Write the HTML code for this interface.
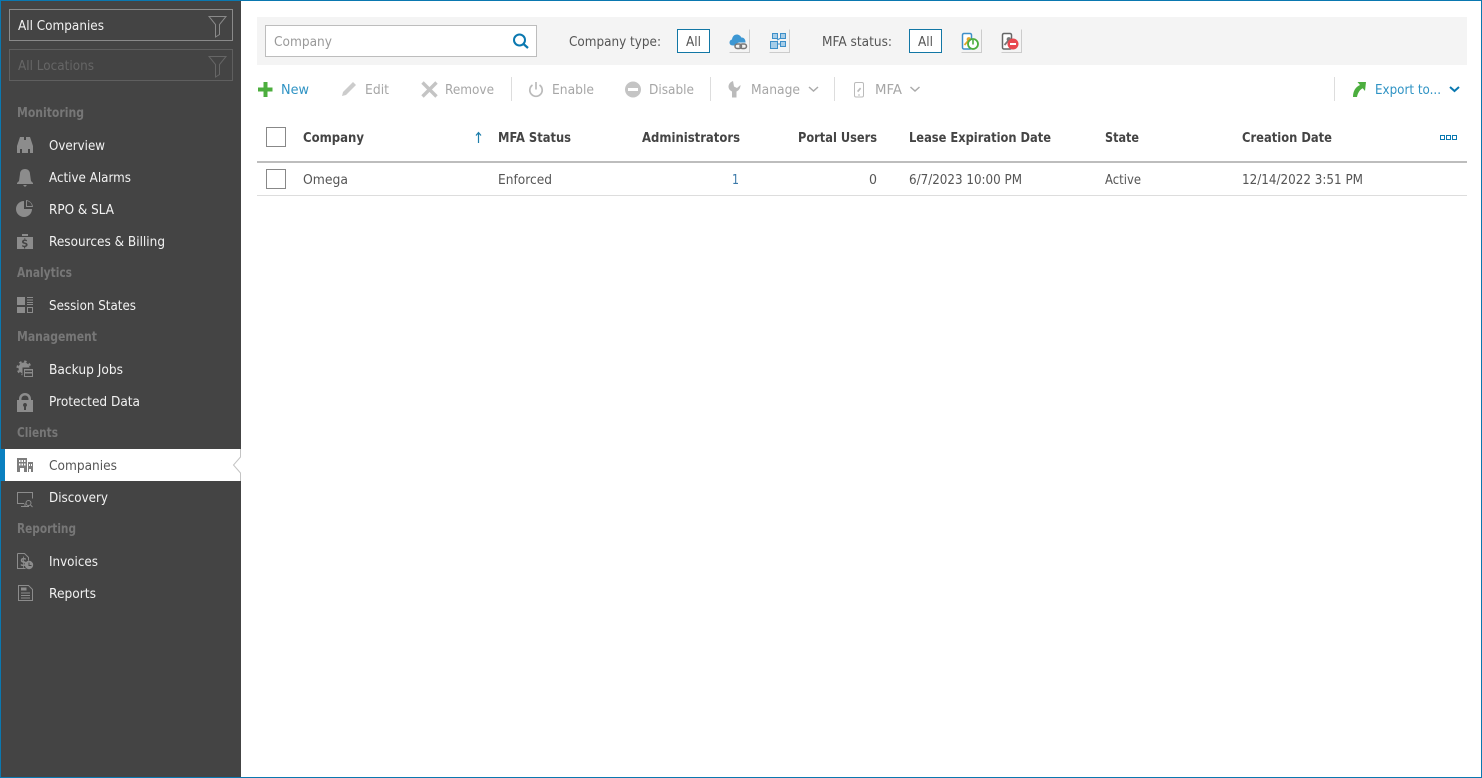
<!DOCTYPE html>
<html><head><meta charset="utf-8"><title>Companies</title>
<style>
html,body{margin:0;padding:0;background:#fff;overflow:hidden}
svg{display:block}
text{font-family:"DejaVu Sans","Liberation Sans",sans-serif;font-size:13px}
.n{fill:#f2f2f2}
.h{fill:#777;font-weight:bold}
.d{fill:#a6a6a6}
.t{fill:#555}
.b{fill:#444;font-weight:bold}
.l{fill:#2f93c4}
</style></head><body>
<svg xmlns="http://www.w3.org/2000/svg" width="1482" height="778" viewBox="0 0 1482 778">
<rect width="1482" height="778" fill="#fff"/>
<rect x="0" y="0" width="241" height="778" fill="#444"/>
<rect x="0" y="0" width="1482" height="1" fill="#0a78b0"/>
<rect x="0" y="0" width="1" height="778" fill="#0a78b0"/>
<rect x="1481" y="0" width="1" height="778" fill="#0a78b0"/>
<rect x="0" y="777" width="1482" height="1" fill="#0a78b0"/>

<!-- scopes -->
<rect x="9.500" y="9.500" width="223" height="31" fill="none" stroke="#8a8a8a"/>
<text class="n" x="18" y="30" textLength="86" lengthAdjust="spacingAndGlyphs">All Companies</text>
<path d="M209 16.500h17l-6.500 8v10l-4 2.500v-12.500z" fill="none" stroke="#8a8a8a"/>
<rect x="9.500" y="49.500" width="223" height="31" fill="none" stroke="#5f5f5f"/>
<text x="18" y="70" fill="#666" textLength="76" lengthAdjust="spacingAndGlyphs">All Locations</text>
<path d="M209 56.500h17l-6.500 8v10l-4 2.500v-12.500z" fill="none" stroke="#666"/>

<!-- nav -->
<text class="h" x="17" y="117" textLength="67" lengthAdjust="spacingAndGlyphs">Monitoring</text>
<text class="n" x="49" y="150" textLength="56" lengthAdjust="spacingAndGlyphs">Overview</text>
<text class="n" x="49" y="182" textLength="82" lengthAdjust="spacingAndGlyphs">Active Alarms</text>
<text class="n" x="49" y="214" textLength="65" lengthAdjust="spacingAndGlyphs">RPO &amp; SLA</text>
<text class="n" x="49" y="246" textLength="116" lengthAdjust="spacingAndGlyphs">Resources &amp; Billing</text>
<text class="h" x="17" y="277" textLength="55" lengthAdjust="spacingAndGlyphs">Analytics</text>
<text class="n" x="49" y="310" textLength="87" lengthAdjust="spacingAndGlyphs">Session States</text>
<text class="h" x="17" y="341" textLength="80" lengthAdjust="spacingAndGlyphs">Management</text>
<text class="n" x="49" y="374" textLength="74" lengthAdjust="spacingAndGlyphs">Backup Jobs</text>
<text class="n" x="49" y="406" textLength="91" lengthAdjust="spacingAndGlyphs">Protected Data</text>
<text class="h" x="17" y="437" textLength="41" lengthAdjust="spacingAndGlyphs">Clients</text>
<rect x="0" y="449" width="241" height="32" fill="#fff"/>
<rect x="0" y="449" width="5" height="32" fill="#0a80c0"/>
<path d="M240.500 449v8l-7 8 7 8v8" fill="none" stroke="#c4c4c4"/>
<text x="49" y="470" fill="#555" textLength="68" lengthAdjust="spacingAndGlyphs">Companies</text>
<text class="n" x="49" y="502" textLength="59" lengthAdjust="spacingAndGlyphs">Discovery</text>
<text class="h" x="17" y="533" textLength="59" lengthAdjust="spacingAndGlyphs">Reporting</text>
<text class="n" x="49" y="566" textLength="49" lengthAdjust="spacingAndGlyphs">Invoices</text>
<text class="n" x="49" y="598" textLength="47" lengthAdjust="spacingAndGlyphs">Reports</text>

<!-- nav icons -->
<g fill="#8c8c8c">
<path d="M20 137h4v3h1v13h-3v-4h-2v4h-3v-7zM26 137h4l3 9v7h-3v-4h-2v4h-3v-13h1zM25 141h1v4h-1z"/>
<path d="M25 169c3 0 5 2 5 5l1 7 2 2v1H17v-1l2-2 1-7c0-3 2-5 5-5zM23 185h4l-2 2z"/>
<path d="M24 201v8h8a8 8 0 1 1-8-8z"/><path d="M26 200a8 8 0 0 1 7 7h-7zM27 201v5h5a6 6 0 0 0-5-5z" fill-rule="evenodd"/>
<path d="M22 234h6v2h-6z"/><path fill-rule="evenodd" d="M17 237h16v12H17zM24.500 238v1.500c-1.500.2-2.500 1-2.500 2.200 0 1.300 1 1.800 2.500 2.200 1 .3 1.300.5 1.300 1 0 .5-.6.8-1.400.8s-1.600-.3-2.200-.7v1.500c.5.3 1.100.5 1.800.6v1.400h1.200v-1.400c1.500-.2 2.400-1.100 2.400-2.300 0-1.300-.9-1.900-2.400-2.300-1.100-.3-1.400-.5-1.400-.9s.5-.7 1.200-.7 1.300.2 1.900.5v-1.400c-.5-.2-1-.4-1.700-.5V238z"/>
<path d="M17 297h8v8h-8zM17 307h8v6h-8z"/>
<path d="M27 297h6v1h-6zM27 299.500h6v1h-6zM27 302h6v1h-6zM27 304h6v1h-6z"/>
<path fill-rule="evenodd" d="M27 307h6v6h-6zM28 308v4h4v-4z"/>
<circle cx="24" cy="368" r="5.500"/>
<circle cx="24" cy="368" r="6.500" fill="none" stroke="#8c8c8c" stroke-width="2" stroke-dasharray="2.400 2.700"/>
<rect x="22.500" y="367.500" width="11" height="9.500" fill="#444"/>
<path fill-rule="evenodd" d="M24 369h9v8h-9zM25 370.500v1.500h7v-1.500zM25 373.500v2.500h7v-2.500z"/>
<path fill-rule="evenodd" d="M25 393c-3.500 0-6 2.500-6 6v1h-2v12h16v-12h-2v-1c0-3.500-2.500-6-6-6zm0 2.500c2 0 3.500 1.500 3.500 3.500v1h-7v-1c0-2 1.500-3.500 3.500-3.500zM25 403a2 2 0 0 1 1 3.700V410h-2v-3.300a2 2 0 0 1 1-3.700z"/>
</g>
<path fill="#7d7d7d" fill-rule="evenodd" d="M17 458h10v14h-3v-4h-4v4h-3zM19 460v2h1.500v-2zM21.500 460v2H23v-2zM24 460v2h1.500v-2zM19 463.500v2h1.500v-2zM21.500 463.500v2H23v-2zM24 463.500v2h1.500v-2zM28 462h5v10h-2v-3h-2v3h-1zM29 464v2h1v-2zM31 464v2h1v-2z"/>
<g fill="none" stroke="#8c8c8c">
<path d="M24 503.500h-6.500v-11h15v6M25 503.500v3M21 506.500h8"/>
<circle cx="28.500" cy="503" r="2.500"/><path d="M30.500 505l2 2"/>
<path d="M17.500 553.500h7l4 4v3M17.500 553.500v15h8"/>
<path d="M18.500 585.500h10l4 4v11h-14zM21 593h9M21 595.500h9M21 598h9"/>
</g>
<rect x="21" y="587.500" width="5.500" height="3" fill="#8c8c8c"/>
<text x="20" y="566" fill="#8c8c8c" style="font-size:12px;font-weight:bold" textLength="7" lengthAdjust="spacingAndGlyphs">$</text>
<circle cx="29" cy="565" r="4.200" fill="#8c8c8c"/><path d="M29 562.500v3h2.500" stroke="#444" fill="none"/>

<!-- filter bar -->
<rect x="257" y="17" width="1210" height="48" fill="#f4f4f4"/>
<rect x="265.500" y="25.500" width="271" height="31" fill="#fff" stroke="#bdbdbd"/>
<text x="274" y="46" fill="#999" textLength="58" lengthAdjust="spacingAndGlyphs">Company</text>
<circle cx="519.500" cy="40" r="5.500" fill="none" stroke="#0a78b0" stroke-width="2"/>
<path d="M523.500 44l4.500 4" stroke="#0a78b0" stroke-width="2.200" fill="none"/>
<text class="t" x="569" y="46" textLength="92" lengthAdjust="spacingAndGlyphs">Company type:</text>
<rect x="677.500" y="29.500" width="32" height="23" fill="#fff" stroke="#1277a5"/>
<text class="t" x="686" y="46" textLength="15" lengthAdjust="spacingAndGlyphs">All</text>
<path d="M729.500 52.500h20v-23" fill="none" stroke="#ccc"/>
<path d="M733 45.500c-2.500 0-3.500-1.500-3.500-3 0-1.500 1-2.700 2.500-3 .3-3 2.300-5 4.800-5 2 0 3.700 1.200 4.500 3 2.500-.3 4.200 1.800 4.200 4.500v.5h-6c-1.500 0-3 1-3.500 3z" fill="#3d97d3"/>
<g fill="none" stroke="#777" stroke-width="1.500"><rect x="735" y="44" width="6.500" height="4.500" rx="2.200"/><rect x="740" y="44" width="6.500" height="4.500" rx="2.200"/></g>
<path d="M769.500 52.500h20v-23" fill="none" stroke="#ccc"/>
<g fill="#a6cde8" stroke="#3d8fc9"><rect x="772.500" y="33.500" width="5" height="5"/><rect x="780.500" y="33.500" width="5" height="5"/><rect x="780.500" y="41.500" width="5" height="5"/><rect x="770.500" y="41.500" width="7" height="7"/></g>
<path d="M778 44h3M777 40l4-2" stroke="#3d8fc9" fill="none"/>
<text class="t" x="822" y="46" textLength="70" lengthAdjust="spacingAndGlyphs">MFA status:</text>
<rect x="909.500" y="29.500" width="32" height="23" fill="#fff" stroke="#1277a5"/>
<text class="t" x="918" y="46" textLength="15" lengthAdjust="spacingAndGlyphs">All</text>
<path d="M961.500 52.500h20v-23" fill="none" stroke="#ccc"/>
<rect x="962.500" y="33.500" width="9" height="15.500" rx="1.500" fill="#fff" stroke="#3d8fc9" stroke-width="1.500"/>
<path d="M964.500 45l3.500-4" stroke="#e4a62c" stroke-width="1.800" fill="none"/><circle cx="968.800" cy="39.300" r="2.200" fill="#e4a62c"/>
<circle cx="973" cy="44" r="5" fill="#fff" stroke="#4cae3e" stroke-width="1.800"/><path d="M973 40v4.500" stroke="#4cae3e" stroke-width="1.600"/>
<path d="M1001.500 52.500h20v-23" fill="none" stroke="#ccc"/>
<rect x="1002.500" y="33.500" width="9" height="15.500" rx="1.500" fill="#fff" stroke="#666" stroke-width="1.500"/>
<path d="M1004.500 45l3.500-4" stroke="#777" stroke-width="1.800" fill="none"/><circle cx="1008.800" cy="39.300" r="2.200" fill="#777"/>
<circle cx="1013" cy="44" r="5.500" fill="#e8484f"/><rect x="1010" y="43" width="6" height="2" fill="#fff"/>

<!-- toolbar -->
<path d="M263.500 82h4v5.500h5v4h-5v5.500h-4v-5.500h-5.500v-4h5.500z" fill="#4cae3e"/>
<text class="l" x="281" y="94" textLength="28" lengthAdjust="spacingAndGlyphs">New</text>
<path d="M342 96l1-4 10-10 3 3-10 10z" fill="#ccc"/>
<text class="d" x="365" y="94" textLength="24" lengthAdjust="spacingAndGlyphs">Edit</text>
<path d="M422.500 82.500l14 14M436.500 82.500l-14 14" stroke="#c4c4c4" stroke-width="3.400" fill="none"/>
<text class="d" x="445" y="94" textLength="49" lengthAdjust="spacingAndGlyphs">Remove</text>
<rect x="511" y="77" width="1" height="24" fill="#ddd"/>
<path d="M532.500 85a6.200 6.200 0 1 0 7 0M536 82v7.500" stroke="#bbb" stroke-width="1.700" fill="none"/>
<text class="d" x="552" y="94" textLength="42" lengthAdjust="spacingAndGlyphs">Enable</text>
<circle cx="633" cy="89.500" r="8" fill="#c4c4c4"/><rect x="628" y="88" width="10" height="3" fill="#fff"/>
<text class="d" x="649" y="94" textLength="45" lengthAdjust="spacingAndGlyphs">Disable</text>
<rect x="710" y="77" width="1" height="24" fill="#ddd"/>
<path d="M733 81c-3 1-4.500 3.500-4.500 5.500 0 2.500 1.500 4 3.500 5v6h4.500v-6c2.500-1 4-3.500 4-6.500l-3.500 3-3-1.500-.5-3z" fill="#bbb"/>
<text class="d" x="751" y="94" textLength="49" lengthAdjust="spacingAndGlyphs">Manage</text>
<path d="M809 87l4.500 4 4.500-4" stroke="#aaa" stroke-width="1.500" fill="none"/>
<rect x="834" y="77" width="1" height="24" fill="#ddd"/>
<rect x="854.500" y="82.500" width="9" height="14.500" rx="1.500" fill="none" stroke="#bbb"/>
<path d="M857 91l3-3.500 1.200 1.200-3 3.500z" fill="#bbb"/><rect x="858" y="94.500" width="2" height="1" fill="#bbb"/>
<text class="d" x="875" y="94" textLength="27" lengthAdjust="spacingAndGlyphs">MFA</text>
<path d="M910.500 87l4.500 4 4.500-4" stroke="#aaa" stroke-width="1.500" fill="none"/>
<rect x="1334" y="77" width="1" height="24" fill="#ddd"/>
<path d="M1353 97c0-6 2.500-10 7-12l-2.500-3h8.500l-1 9-2.300-2.800c-2.800 1.300-5 4.800-5.700 8.800z" fill="#4cae3e"/>
<text class="l" x="1375" y="94" textLength="66" lengthAdjust="spacingAndGlyphs">Export to...</text>
<path d="M1450 87l4.500 4 4.500-4" stroke="#0a78b0" stroke-width="2" fill="none"/>

<!-- table header -->
<rect x="266.500" y="127.500" width="19" height="19" fill="#fff" stroke="#888"/>
<text class="b" x="303" y="142" textLength="61" lengthAdjust="spacingAndGlyphs">Company</text>
<path d="M478.500 143v-10M476 135.500l2.500-3 2.500 3" stroke="#1c7dab" fill="none" stroke-width="1.200"/>
<text class="b" x="498" y="142" textLength="73" lengthAdjust="spacingAndGlyphs">MFA Status</text>
<text class="b" x="642" y="142" textLength="98" lengthAdjust="spacingAndGlyphs">Administrators</text>
<text class="b" x="798" y="142" textLength="79" lengthAdjust="spacingAndGlyphs">Portal Users</text>
<text class="b" x="909" y="142" textLength="142" lengthAdjust="spacingAndGlyphs">Lease Expiration Date</text>
<text class="b" x="1105" y="142" textLength="34" lengthAdjust="spacingAndGlyphs">State</text>
<text class="b" x="1242" y="142" textLength="90" lengthAdjust="spacingAndGlyphs">Creation Date</text>
<g fill="none" stroke="#0a78b0"><rect x="1440.500" y="135.500" width="4" height="4"/><rect x="1446.500" y="135.500" width="4" height="4"/><rect x="1452.500" y="135.500" width="4" height="4"/></g>
<rect x="257" y="161" width="1210" height="2" fill="#bdbdbd"/>

<!-- row -->
<rect x="266.500" y="169.500" width="19" height="19" fill="#fff" stroke="#888"/>
<text class="t" x="303" y="184" textLength="45" lengthAdjust="spacingAndGlyphs">Omega</text>
<text class="t" x="498" y="184" textLength="54" lengthAdjust="spacingAndGlyphs">Enforced</text>
<text x="732" y="184" fill="#3a78a8" textLength="7" lengthAdjust="spacingAndGlyphs">1</text>
<text class="t" x="869" y="184" textLength="8" lengthAdjust="spacingAndGlyphs">0</text>
<text class="t" x="909" y="184" textLength="113" lengthAdjust="spacingAndGlyphs">6/7/2023 10:00 PM</text>
<text class="t" x="1105" y="184" textLength="36" lengthAdjust="spacingAndGlyphs">Active</text>
<text class="t" x="1242" y="184" textLength="121" lengthAdjust="spacingAndGlyphs">12/14/2022 3:51 PM</text>
<rect x="257" y="195" width="1210" height="1" fill="#ddd"/>
</svg>
</body></html>
